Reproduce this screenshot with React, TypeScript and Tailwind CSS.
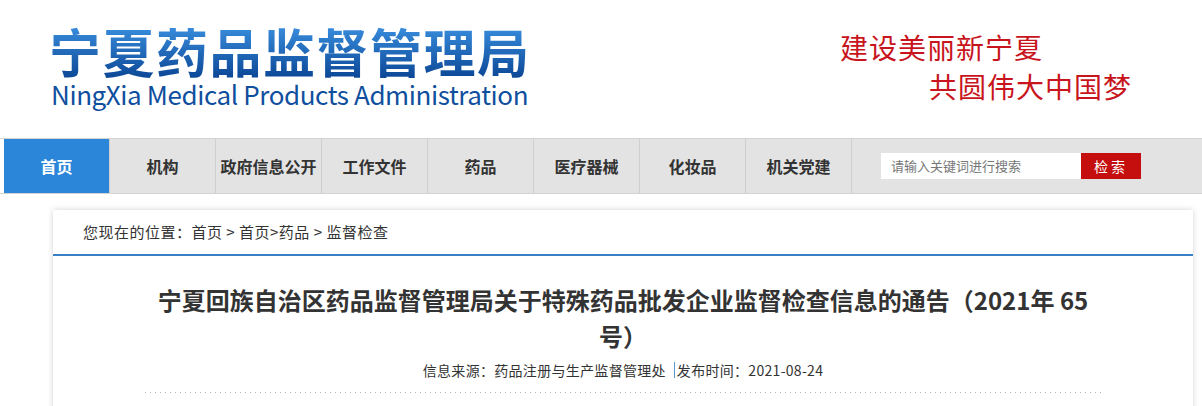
const CJK = { fontFamily: '"Noto Sans CJK SC", "Noto Sans", sans-serif' }

const NAV = ['首页', '机构', '政府信息公开', '工作文件', '药品', '医疗器械', '化妆品', '机关党建']

export default function App() {
  return (
    <div className="w-[1202px] bg-white text-[#333] [text-spacing-trim:space-all]" style={CJK}>
      {/* Header */}
      <div className="h-[138px] flex justify-between">
        <div className="pl-[49px] pt-[22px]">
          <div className="text-[52px] font-bold leading-[58px] tracking-[1.5px] bg-linear-to-b from-[#3d93e3] to-[#0a4594] bg-clip-text text-transparent">
            宁夏药品监督管理局
          </div>
          <div className="text-[26px] leading-[30px] tracking-[-0.4px] text-[#0f4f9e] pl-[2px] -mt-[1px]">
            NingXia Medical Products Administration
          </div>
        </div>
        <div className="pr-[70px] pt-[28px] text-[#c8141c] text-[28px] leading-[39px] tracking-[1px]">
          <div>建设美丽新宁夏</div>
          <div className="pl-[89px]">共圆伟大中国梦</div>
        </div>
      </div>

      {/* Nav */}
      <div className="border-y border-[#d3d3d3] pl-[4px]">
        <div className="h-[54px] bg-[#e3e3e3] flex items-stretch">
          {NAV.map((n, i) => (
            <div
              key={n}
              className={
                i === 0
                  ? 'w-[105px] bg-[#2b86d9] text-white flex items-center justify-center text-[16px] font-bold'
                  : 'w-[106px] border-l border-[#cfcfcf] flex items-center justify-center text-[16px] font-bold text-[#333]'
              }
            >
              {n}
            </div>
          ))}
          <div className="border-l border-[#cfcfcf] pl-[29px] flex items-center">
            <div className="w-[200px] h-[26px] bg-white flex items-center pl-[10px] text-[13px] text-[#777]">
              请输入关键词进行搜索
            </div>
            <button className="w-[60px] h-[26px] bg-[#c50e0e] text-white text-[14px] tracking-[3px]">
              检索
            </button>
          </div>
        </div>
      </div>

      {/* Card */}
      <div className="pt-[16px] pl-[53px]">
        <div className="w-[1140px] h-[200px] bg-white shadow-[0_0_6px_rgba(0,0,0,0.18)]">
          <div className="h-[46px] border-b-2 border-[#3a80c4] pl-[30px] flex items-center text-[15px] tracking-[0.5px] text-[#333]">
            您现在的位置：首页 &gt; 首页&gt;药品 &gt; 监督检查
          </div>
          <div className="px-[92px] pt-[26px]">
            <h1 className="text-center text-[24px] font-bold leading-[36px] text-[#333]">
              宁夏回族自治区药品监督管理局关于特殊药品批发企业监督检查信息的通告（2021年 65
              <br />
              号）
            </h1>
            <div className="mt-[6px] flex items-center justify-center text-[14px] leading-[20px] tracking-[0.3px] text-[#333]">
              <span>信息来源：药品注册与生产监督管理处</span>
              <span className="inline-block w-px h-[16px] bg-[#5a96d2] ml-[8px] mr-[2px]" />
              <span>发布时间：2021-08-24</span>
            </div>
            <div className="mt-[12px] h-px bg-[linear-gradient(to_right,#b0b0b0_1px,transparent_1px)] bg-[length:5px_1px]" />
          </div>
        </div>
      </div>
    </div>
  )
}
